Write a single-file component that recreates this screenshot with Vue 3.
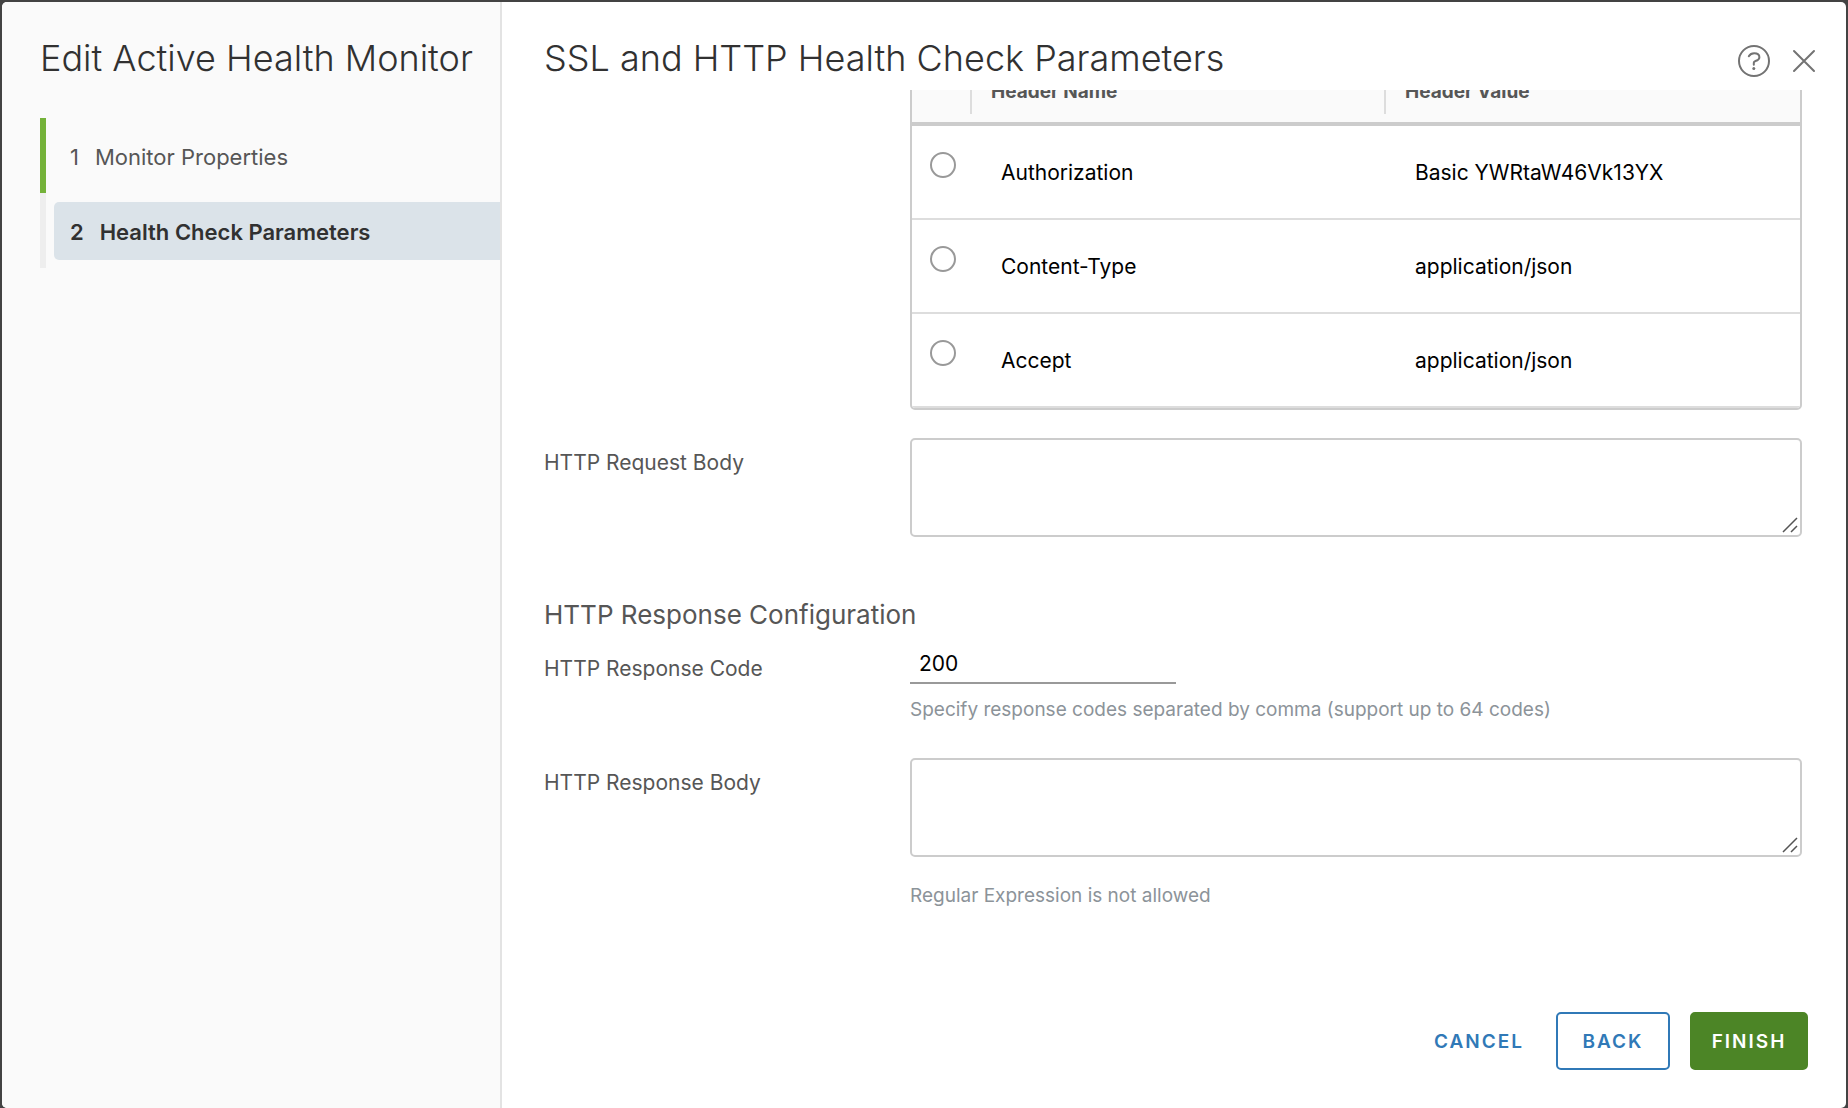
<script setup>
import { ref } from 'vue'

const selected = ref(null)
const responseCode = ref('200')
const requestBody = ref('')
const responseBody = ref('')

const steps = [
  { label: 'Monitor Properties', state: 'done' },
  { label: 'Health Check Parameters', state: 'active' },
]

const headers = ref([
  { name: 'Authorization', value: 'Basic YWRtaW46Vk13YXJlMSE=' },
  { name: 'Content-Type', value: 'application/json' },
  { name: 'Accept', value: 'application/json' },
])
</script>

<template>
  <div class="backdrop">
    <div class="wizard" role="dialog" aria-labelledby="wizard-title">
      <aside class="sidebar">
        <h1 id="wizard-title" class="title">Edit Active Health Monitor</h1>
        <ol class="steps">
          <li v-for="(step, i) in steps" :key="step.label" class="step" :class="step.state">
            <button type="button" class="step-button">
              <span class="step-number">{{ i + 1 }}</span>
              <span>{{ step.label }}</span>
            </button>
          </li>
        </ol>
      </aside>

      <main class="page">
        <header class="page-header">
          <h2 class="title">SSL and HTTP Health Check Parameters</h2>
          <div class="page-tools">
            <button type="button" class="icon-button" aria-label="Help">
              <svg width="32" height="32" viewBox="0 0 32 32" fill="none" stroke="#737373" stroke-width="2">
                <circle cx="16" cy="16" r="15" />
                <path d="M10.8 11.2C12 9.2 13.8 8.2 16.2 8.2C19.3 8.2 21.4 9.8 21.4 12.2C21.4 15 18.9 15.6 17.1 16.2C16.2 16.5 15.8 16.9 15.8 17.8V19.8" stroke-linecap="round" />
                <circle cx="15.8" cy="23.6" r="1.5" fill="#737373" stroke="none" />
              </svg>
            </button>
            <button type="button" class="icon-button" aria-label="Close">
              <svg width="24" height="24" viewBox="0 0 24 24" fill="none" stroke="#737373" stroke-width="2" stroke-linecap="round">
                <path d="M2 2L22 22M22 2L2 22" />
              </svg>
            </button>
          </div>
        </header>

        <div class="page-body">
          <form class="form" @submit.prevent>
            <div class="row scrolled">
              <span class="label"></span>
              <div class="field">
                <div class="grid-frame">
                  <table class="grid">
                    <thead>
                      <tr>
                        <th class="pick"></th>
                        <th scope="col"><span>Header Name</span></th>
                        <th scope="col"><span>Header Value</span></th>
                      </tr>
                    </thead>
                    <tbody>
                      <tr v-for="(h, i) in headers" :key="h.name">
                        <td class="pick">
                          <input v-model="selected" type="radio" name="header" :value="i" :aria-label="'Select ' + h.name" />
                        </td>
                        <td><input v-model="h.name" type="text" class="cell-input" aria-label="Header Name" /></td>
                        <td><input v-model="h.value" type="text" class="cell-input" aria-label="Header Value" /></td>
                      </tr>
                    </tbody>
                  </table>
                </div>
              </div>
            </div>

            <div class="row request">
              <label class="label" for="request-body">HTTP Request Body</label>
              <div class="field">
                <div class="area">
                  <textarea id="request-body" v-model="requestBody"></textarea>
                  <svg class="grip" width="16" height="16" viewBox="0 0 16 16" stroke="#555" stroke-width="1.5"><path d="M1 15L15 1M9 15L15 9" /></svg>
                </div>
              </div>
            </div>

            <h3 class="section">HTTP Response Configuration</h3>

            <div class="row">
              <label class="label" for="response-code">HTTP Response Code</label>
              <div class="field">
                <input id="response-code" v-model="responseCode" type="text" class="line-input" />
                <p class="helper">Specify response codes separated by comma (support up to 64 codes)</p>
              </div>
            </div>

            <div class="row response">
              <label class="label" for="response-body">HTTP Response Body</label>
              <div class="field">
                <div class="area">
                  <textarea id="response-body" v-model="responseBody"></textarea>
                  <svg class="grip" width="16" height="16" viewBox="0 0 16 16" stroke="#555" stroke-width="1.5"><path d="M1 15L15 1M9 15L15 9" /></svg>
                </div>
                <p class="helper wide">Regular Expression is not allowed</p>
              </div>
            </div>
          </form>
        </div>

        <footer class="page-footer">
          <button type="button" class="btn link">CANCEL</button>
          <button type="button" class="btn outline">BACK</button>
          <button type="button" class="btn primary">FINISH</button>
        </footer>
      </main>
    </div>
  </div>
</template>

<style>
body {
  margin: 0;
}
</style>

<style scoped>
* {
  box-sizing: border-box;
}
.backdrop {
  display: flex;
  min-height: 100vh;
  padding: 2px 2px 0;
  background: #434343;
  font-family: Inter, "Open Sans", sans-serif;
  color: #565656;
}
.wizard {
  display: flex;
  flex: 1;
  min-width: 0;
  overflow: hidden;
  border-radius: 5px;
  background: #fff;
}
button,
input,
textarea {
  font-family: inherit;
}
button {
  cursor: pointer;
}
.title {
  margin: 0;
  font-size: 36px;
  line-height: 44px;
  font-weight: 300;
  color: #313131;
  white-space: nowrap;
}
.sidebar {
  flex: none;
  width: 500px;
  padding: 34px 0 0 38px;
  border-right: 2px solid #e3e3e3;
  background: #fafafa;
}
.steps {
  margin: 38px 0 0;
  padding: 0;
  list-style: none;
}
.step {
  display: flex;
  align-items: center;
  height: 75px;
  padding-left: 8px;
  border-left: 6px solid #eee;
}
.step.done {
  border-left-color: #74b239;
}
.step-button {
  display: flex;
  align-items: center;
  gap: 16px;
  width: 100%;
  height: 58px;
  padding: 2px 16px 0;
  border: 0;
  border-radius: 5px 0 0 5px;
  background: none;
  font-size: 22px;
  color: #565656;
}
.active .step-button {
  background: #dbe3e9;
  color: #313131;
  font-weight: 600;
}
.page {
  display: flex;
  flex: 1;
  flex-direction: column;
  min-width: 0;
}
.page-header {
  display: flex;
  flex: none;
  align-items: flex-start;
  justify-content: space-between;
  height: 88px;
  padding: 34px 30px 0 42px;
}
.page-tools {
  display: flex;
  align-items: center;
  gap: 22px;
  height: 50px;
}
.icon-button {
  display: flex;
  padding: 0;
  border: 0;
  background: none;
}
.page-body {
  flex: 1;
  overflow: hidden;
  padding: 0 44px 0 42px;
}
.form {
  display: flex;
  flex-direction: column;
}
.row {
  display: flex;
}
.row.scrolled {
  margin-top: -24px;
}
.row.request {
  margin-top: 28px;
}
.row.response {
  margin-top: 36px;
}
.label {
  flex: none;
  width: 366px;
  padding-top: 13px;
  font-size: 21px;
  line-height: 24px;
}
.field {
  flex: 1;
  min-width: 0;
}
.grid-frame {
  overflow: hidden;
  border: 2px solid #ccc;
  border-radius: 5px;
}
.grid {
  width: 100%;
  border-collapse: separate;
  border-spacing: 0;
  table-layout: fixed;
}
.grid th {
  height: 58px;
  padding: 0;
  border-bottom: 4px solid #ccc;
  background: #fafafa;
  font-size: 19px;
  font-weight: 700;
  text-align: left;
  vertical-align: top;
}
.grid th span {
  display: block;
  padding: 13px 0 11px 19px;
  border-left: 2px solid #ddd;
  margin-left: -2px;
  line-height: 22px;
}
.grid th.pick {
  width: 60px;
}
.grid td {
  height: 94px;
  padding: 0 0 0 19px;
  border-bottom: 2px solid #ddd;
}
.grid td.pick {
  padding: 26px 0 0 18px;
  vertical-align: top;
}
.grid input[type='radio'] {
  display: block;
  appearance: none;
  width: 26px;
  height: 26px;
  margin: 0;
  border: 2px solid #999;
  border-radius: 50%;
  background: #fff;
}
.grid input[type='radio']:checked {
  border: 8px solid #0072a3;
}
.cell-input {
  display: block;
  width: 268px;
  height: 40px;
  padding: 0 10px;
  border: 0;
  background: none;
  font-size: 21px;
  color: #000;
}
.area {
  position: relative;
}
.area textarea {
  display: block;
  width: 100%;
  height: 99px;
  padding: 10px;
  border: 2px solid #ccc;
  border-radius: 5px;
  resize: none;
  font-size: 21px;
}
.grip {
  position: absolute;
  right: 4px;
  bottom: 4px;
  pointer-events: none;
}
.section {
  margin: 63px 0 14px;
  font-size: 26px;
  line-height: 30px;
  font-weight: 400;
}
.line-input {
  display: block;
  width: 266px;
  height: 40px;
  padding: 0 9px;
  border: 0;
  border-bottom: 2px solid #999;
  background: none;
  font-size: 21px;
  color: #000;
}
.helper {
  margin: 14px 0 0;
  font-size: 19px;
  line-height: 24px;
  color: #8c9399;
}
.helper.wide {
  margin-top: 27px;
}
.page-footer {
  display: flex;
  flex: none;
  justify-content: flex-end;
  padding: 0 38px 38px;
}
.btn {
  height: 58px;
  padding: 0 18px;
  border: 2px solid transparent;
  border-radius: 5px;
  background: none;
  font-size: 19px;
  font-weight: 600;
  letter-spacing: 2px;
}
.btn.link {
  margin-right: 12px;
  color: #3079b7;
}
.btn.outline {
  width: 114px;
  border-color: #3079b7;
  color: #3079b7;
}
.btn.primary {
  width: 118px;
  margin-left: 20px;
  background: #4c8526;
  border-color: #4c8526;
  color: #fff;
}
</style>
